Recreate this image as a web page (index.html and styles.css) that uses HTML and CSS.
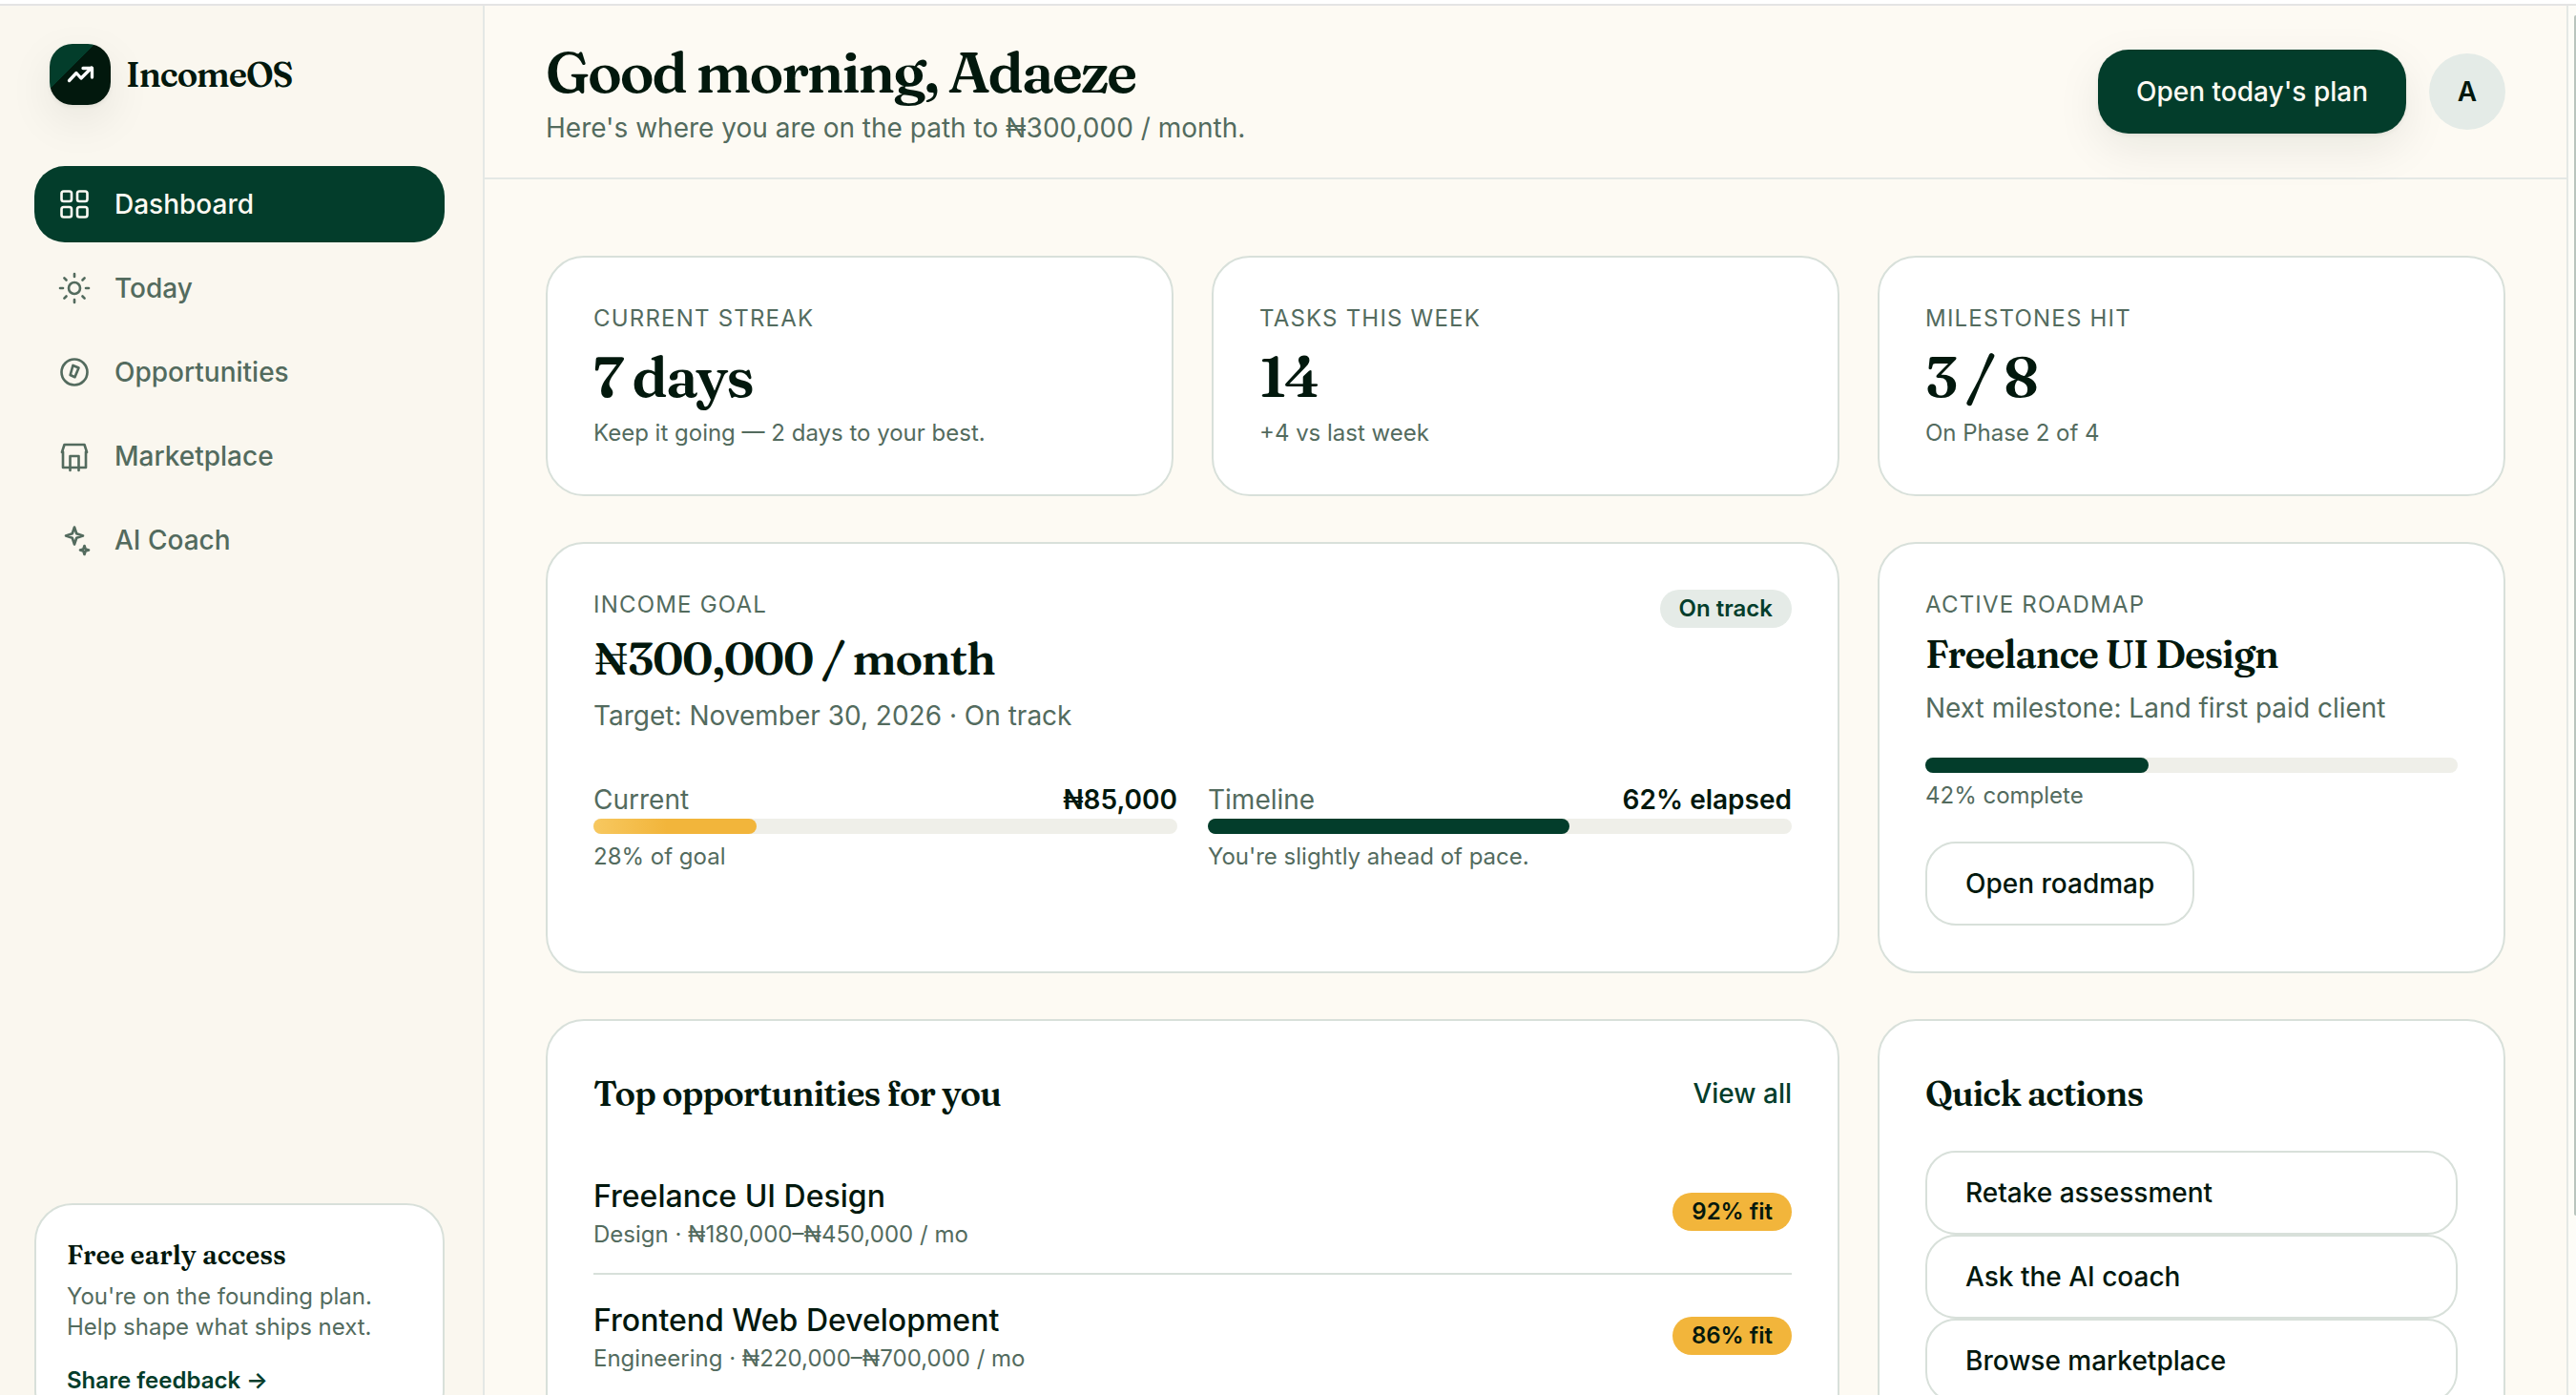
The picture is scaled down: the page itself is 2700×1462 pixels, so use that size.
FILE: index.html
```html
<!DOCTYPE html>
<html lang="en">
<head>
    <meta charset="UTF-8">
    <title>IncomeOS - Dashboard</title>
    <link rel="stylesheet" href="styles.css">
</head>
<body>
    <div class="app">
        <aside class="sidebar">
            <div class="brand">
                <div class="brand-mark">
                    <svg viewBox="0 0 64 64" fill="none" stroke="currentColor" stroke-width="3.3" stroke-linecap="round" stroke-linejoin="round">
                        <path d="M20.500 38.500l7.500-8 5 5.500 11-11"/>
                        <path d="M35 25.500h9.500v9.500"/>
                    </svg>
                </div>
                <span class="brand-name">IncomeOS</span>
            </div>

            <nav class="nav">
                <a class="nav-item active">
                    <svg class="icon" viewBox="0 0 24 24"><rect x="3" y="3" width="7" height="7" rx="1.5"/><rect x="14" y="3" width="7" height="7" rx="1.5"/><rect x="3" y="14" width="7" height="7" rx="1.5"/><rect x="14" y="14" width="7" height="7" rx="1.5"/></svg>
                    Dashboard
                </a>
                <a class="nav-item">
                    <svg class="icon" viewBox="0 0 24 24"><circle cx="12" cy="12" r="4"/><path d="M12 2v2M12 20v2M2 12h2M20 12h2M4.93 4.93l1.41 1.41M17.66 17.66l1.41 1.41M4.93 19.07l1.41-1.41M17.66 6.34l1.41-1.41"/></svg>
                    Today
                </a>
                <a class="nav-item">
                    <svg class="icon" viewBox="0 0 24 24"><circle cx="12" cy="12" r="9"/><path d="M11 7.3l4 1.7-2.7 6.5L9.1 14z"/></svg>
                    Opportunities
                </a>
                <a class="nav-item">
                    <svg class="icon" viewBox="0 0 24 24"><path d="M3.3 9.3L5 4h14l1.7 5.3M4 9v11h16V9M9 22V12h6v10"/></svg>
                    Marketplace
                </a>
                <a class="nav-item">
                    <svg class="icon" viewBox="0 0 24 24"><path d="M12 3l1.5 4.5L18 9l-4.5 1.5L12 15l-1.5-4.5L6 9l4.5-1.5z"/><path d="M19 16l.75 2.25L22 19l-2.25.75L19 22l-.75-2.25L16 19l2.25-.75z"/></svg>
                    AI Coach
                </a>
            </nav>

            <div class="promo">
                <h4>Free early access</h4>
                <p>You're on the founding plan. Help shape what ships next.</p>
                <a class="promo-link">Share feedback →</a>
            </div>
        </aside>

        <main class="main">
            <header class="topbar">
                <div class="greeting">
                    <h1>Good morning, Adaeze</h1>
                    <p class="body-text">Here's where you are on the path to ₦300,000 / month.</p>
                </div>
                <div class="topbar-actions">
                    <button class="btn btn-primary">Open today's plan</button>
                    <div class="avatar">A</div>
                </div>
            </header>

            <div class="content">
                <section class="grid">
                    <div class="card stat">
                        <div class="label">Current streak</div>
                        <div class="stat-value">7 days</div>
                        <div class="small">Keep it going — 2 days to your best.</div>
                    </div>
                    <div class="card stat">
                        <div class="label">Tasks this week</div>
                        <div class="stat-value">14</div>
                        <div class="small">+4 vs last week</div>
                    </div>
                    <div class="card stat">
                        <div class="label">Milestones hit</div>
                        <div class="stat-value">3 / 8</div>
                        <div class="small">On Phase 2 of 4</div>
                    </div>
                </section>

                <section class="grid">
                    <div class="card span-2">
                        <div class="card-head">
                            <div>
                                <div class="label">Income goal</div>
                                <div class="goal-value">₦300,000 / month</div>
                                <p class="body-text goal-target">Target: November 30, 2026 · On track</p>
                            </div>
                            <span class="badge">On track</span>
                        </div>
                        <div class="meters">
                            <div>
                                <div class="meter-row"><span>Current</span><strong>₦85,000</strong></div>
                                <div class="bar"><div class="bar-fill gold" style="width: 28%"></div></div>
                                <div class="small">28% of goal</div>
                            </div>
                            <div>
                                <div class="meter-row"><span>Timeline</span><strong>62% elapsed</strong></div>
                                <div class="bar"><div class="bar-fill" style="width: 62%"></div></div>
                                <div class="small">You're slightly ahead of pace.</div>
                            </div>
                        </div>
                    </div>
                    <div class="card">
                        <div class="label">Active roadmap</div>
                        <h2 class="roadmap-title">Freelance UI Design</h2>
                        <p class="body-text">Next milestone: Land first paid client</p>
                        <div class="bar roadmap-bar"><div class="bar-fill" style="width: 42%"></div></div>
                        <div class="small">42% complete</div>
                        <button class="btn btn-outline roadmap-btn">Open roadmap</button>
                    </div>
                </section>

                <section class="grid">
                    <div class="card span-2">
                        <div class="section-head">
                            <h3>Top opportunities for you</h3>
                            <a class="view-all">View all</a>
                        </div>
                        <div class="opportunity">
                            <div>
                                <div class="opportunity-name">Freelance UI Design</div>
                                <div class="opportunity-meta">Design · ₦180,000–₦450,000 / mo</div>
                            </div>
                            <span class="badge badge-gold">92% fit</span>
                        </div>
                        <div class="opportunity">
                            <div>
                                <div class="opportunity-name">Frontend Web Development</div>
                                <div class="opportunity-meta">Engineering · ₦220,000–₦700,000 / mo</div>
                            </div>
                            <span class="badge badge-gold">86% fit</span>
                        </div>
                    </div>
                    <div class="card">
                        <div class="section-head">
                            <h3>Quick actions</h3>
                        </div>
                        <div class="actions">
                            <button class="btn btn-outline">Retake assessment</button>
                            <button class="btn btn-outline">Ask the AI coach</button>
                            <button class="btn btn-outline">Browse marketplace</button>
                        </div>
                    </div>
                </section>
            </div>
        </main>

        <div class="gutter"><div class="thumb"></div></div>
    </div>
</body>
</html>
```
FILE: styles.css
```css
:root {
    --green: #033d2b;
    --ink: #02180d;
    --muted: #536b5e;
    --cream: #fdfaf3;
    --sidebar: #faf7ef;
    --border: #d8e0da;
    --line: #e4e8e5;
    --gold: #f2b53b;
    --serif: "Fraunces", "Liberation Serif", serif;
}

* {
    margin: 0;
    padding: 0;
    box-sizing: border-box;
}

body {
    height: 1462px;
    overflow: hidden;
    border-top: 4px solid #fff;
    background: var(--cream);
    color: var(--ink);
    font-family: "Inter", sans-serif;
    font-size: 28px;
    line-height: 40px;
}

h1, h2, h3, h4 {
    font-family: var(--serif);
    font-weight: 600;
}

.app {
    display: grid;
    grid-template-columns: 508px 1fr 8px;
    grid-template-rows: 100%;
    height: 1529px;
    border-top: 2px solid #e4e4e4;
}

/* Sidebar */
.sidebar {
    display: flex;
    flex-direction: column;
    padding: 40px 40px 36px 36px;
    background: var(--sidebar);
    border-right: 2px solid var(--line);
}

.brand {
    display: flex;
    align-items: center;
    gap: 16px;
    padding-left: 16px;
    margin-bottom: 64px;
}

.brand-mark {
    width: 64px;
    height: 64px;
    border-radius: 24px;
    color: #fff;
    background: linear-gradient(135deg, var(--green) 37%, var(--ink) 37%);
    box-shadow: 0 2px 4px rgba(2, 24, 13, 0.06), 0 16px 48px rgba(2, 24, 13, 0.08);
}

.brand-mark svg {
    display: block;
}

.brand-name {
    font-family: var(--serif);
    font-size: 36px;
    font-weight: 600;
    letter-spacing: -0.03em;
}

.nav {
    display: flex;
    flex-direction: column;
    gap: 8px;
}

.nav-item {
    display: flex;
    align-items: center;
    gap: 24px;
    height: 80px;
    padding: 0 24px;
    border-radius: 32px;
    color: var(--muted);
    font-weight: 500;
}

.nav-item.active {
    background: var(--green);
    color: var(--cream);
}

.icon {
    width: 36px;
    height: 36px;
    fill: none;
    stroke: currentColor;
    stroke-width: 1.75;
    stroke-linecap: round;
    stroke-linejoin: round;
}

.promo {
    margin-top: auto;
    padding: 32px;
    background: #fff;
    border: 2px solid var(--border);
    border-radius: 40px;
    font-size: 24px;
    line-height: 32px;
}

.promo h4 {
    margin-bottom: 8px;
    font-size: 28px;
    line-height: 40px;
}

.promo p {
    margin-bottom: 24px;
    color: var(--muted);
}

.promo-link {
    display: block;
    color: var(--green);
    font-weight: 600;
}

/* Header */
.main {
    border-right: 2px solid var(--line);
}

.topbar {
    display: flex;
    align-items: center;
    justify-content: space-between;
    height: 182px;
    padding: 0 64px;
    border-bottom: 2px solid var(--line);
}

.greeting {
    padding-top: 2px;
}

.greeting h1 {
    margin-bottom: 8px;
    font-size: 60px;
    line-height: 66px;
    letter-spacing: -0.036em;
}

.greeting p {
    line-height: 36px;
}

.body-text {
    color: var(--muted);
}

.topbar-actions {
    display: flex;
    align-items: center;
    gap: 24px;
}

.btn {
    height: 88px;
    padding: 0 40px;
    border: none;
    border-radius: 32px;
    font-family: inherit;
    font-size: 28px;
    font-weight: 500;
    text-align: left;
}

.btn-primary {
    background: var(--green);
    color: var(--cream);
    box-shadow: 0 2px 4px rgba(2, 24, 13, 0.06), 0 16px 48px rgba(2, 24, 13, 0.08);
}

.btn-outline {
    background: #fff;
    color: var(--ink);
    border: 2px solid var(--border);
}

.avatar {
    width: 80px;
    height: 80px;
    border-radius: 50%;
    background: #e4ebe7;
    font-weight: 600;
    line-height: 80px;
    text-align: center;
}

/* Cards */
.content {
    display: flex;
    flex-direction: column;
    gap: 48px;
    padding: 80px 64px;
}

.grid {
    display: grid;
    grid-template-columns: repeat(3, 1fr);
    gap: 40px;
}

.card {
    padding: 48px;
    background: #fff;
    border: 2px solid var(--border);
    border-radius: 40px;
}

.span-2 {
    grid-column: span 2;
}

.label {
    margin-bottom: 8px;
    color: var(--muted);
    font-size: 24px;
    line-height: 32px;
    letter-spacing: 1.2px;
    text-transform: uppercase;
}

.small {
    margin-top: 8px;
    color: var(--muted);
    font-size: 24px;
    line-height: 32px;
}

.stat-value {
    font-family: var(--serif);
    font-size: 60px;
    font-weight: 600;
    line-height: 72px;
    letter-spacing: -0.036em;
}

.card-head {
    display: flex;
    align-items: flex-start;
    justify-content: space-between;
}

.goal-value {
    padding-top: 2px;
    font-family: var(--serif);
    font-size: 48px;
    font-weight: 600;
    line-height: 60px;
    letter-spacing: -0.027em;
}

.goal-target {
    margin-top: 10px;
}

.badge {
    padding: 0 20px;
    border-radius: 20px;
    background: #e5ebe7;
    color: var(--green);
    font-size: 24px;
    font-weight: 600;
}

.badge-gold {
    background: var(--gold);
    color: var(--ink);
}

.meters {
    display: grid;
    grid-template-columns: 1fr 1fr;
    gap: 32px;
    margin-top: 48px;
}

.meter-row {
    display: flex;
    justify-content: space-between;
    color: var(--muted);
}

.meter-row strong {
    color: var(--ink);
    font-weight: 600;
}

.bar {
    height: 16px;
    border-radius: 8px;
    background: #efefe9;
}

.bar-fill {
    height: 100%;
    border-radius: 8px;
    background: var(--green);
}

.bar-fill.gold {
    background: linear-gradient(90deg, #f7c860, var(--gold) 45%);
}

.roadmap-title {
    margin-bottom: 8px;
    font-size: 40px;
    line-height: 56px;
    letter-spacing: -0.025em;
}

.roadmap-bar {
    margin-top: 32px;
}

.roadmap-btn {
    display: block;
    margin-top: 32px;
}

/* Opportunities and actions */
.section-head {
    display: flex;
    align-items: center;
    justify-content: space-between;
    margin-bottom: 32px;
}

.section-head h3 {
    font-size: 36px;
    line-height: 56px;
    letter-spacing: -0.024em;
}

.view-all {
    color: var(--green);
    font-weight: 500;
}

.opportunity {
    display: flex;
    align-items: center;
    justify-content: space-between;
    height: 130px;
    padding-top: 2px;
    border-bottom: 2px solid var(--border);
}

.opportunity-name {
    font-size: 32px;
    font-weight: 500;
    line-height: 46px;
}

.opportunity-meta {
    color: var(--muted);
    font-size: 24px;
    line-height: 34px;
}

.opportunity .badge {
    margin-top: -2px;
}

.actions {
    display: flex;
    flex-direction: column;
}

/* Scrollbar */
.gutter {
    padding: 10px 0 0 6px;
    background: #fdfcf7;
}

.thumb {
    width: 2px;
    height: 1258px;
    background: #b9c4bd;
    border-radius: 2px 0 0 2px;
}
```
